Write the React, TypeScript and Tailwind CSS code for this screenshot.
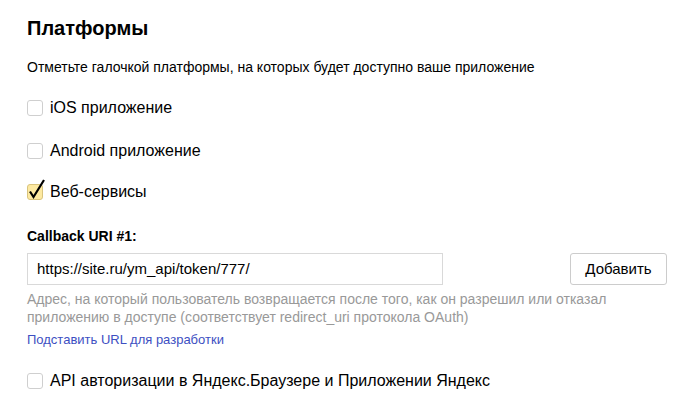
import React from 'react'

function Box({ checked }: { checked?: boolean }) {
  return (
    <span className="relative inline-block w-[16px] h-[16px] shrink-0">
      <span
        className={
          checked
            ? 'absolute inset-0 rounded-[3px] border border-[#d9c47d] bg-[#fde9a1]'
            : 'absolute inset-0 rounded-[3px] border border-[#cfcfcf] bg-white'
        }
      />
      {checked && (
        <svg className="absolute left-[1px] top-[-6px]" width="18" height="22" viewBox="0 0 18 22">
          <path d="M2 13.5 L5.5 19 L16 2" fill="none" stroke="#000" strokeWidth="2.2" strokeLinejoin="miter" />
        </svg>
      )}
    </span>
  )
}

function Check({ label, checked, className }: { label: string; checked?: boolean; className?: string }) {
  return (
    <label className={`flex items-center h-[20px] gap-[7px] text-[16px] text-black ${className ?? ''}`}>
      <Box checked={checked} />
      <span>{label}</span>
    </label>
  )
}

export default function App() {
  return (
    <div className="w-[679px] h-[412px] bg-white pl-[27px] pt-[16px]" style={{ fontFamily: '"Liberation Sans", Arial, sans-serif' }}>
      <div className="w-[640px]">
        <h1 className="text-[20px] leading-[24px] font-bold text-black">Платформы</h1>
        <p className="mt-[19px] text-[14px] leading-[16px] text-black">
          Отметьте галочкой платформы, на которых будет доступно ваше приложение
        </p>

        <Check className="mt-[23px]" label="iOS приложение" />
        <Check className="mt-[23px]" label="Android приложение" />
        <Check className="mt-[21px]" label="Веб-сервисы" checked />

        <div className="mt-[26px] text-[14px] leading-[16px] font-bold text-black">Callback URI #1:</div>

        <div className="mt-[9px] flex items-center justify-between">
          <div className="w-[416px] h-[32px] border border-[#d9d9d9] flex items-center px-[9px] text-[15px] text-black">
            https://site.ru/ym_api/token/777/
          </div>
          <button className="w-[97px] h-[32px] border border-[#cccccc] rounded-[3px] bg-white text-[15px] text-black">
            Добавить
          </button>
        </div>

        <p className="mt-[5px] text-[14px] leading-[18px] text-[#999999]">
          Адрес, на который пользователь возвращается после того, как он разрешил или отказал приложению в доступе (соответствует redirect_uri протокола OAuth)
        </p>

        <a className="block mt-[6px] text-[13px] leading-[16px] text-[#3d4fc2]">Подставить URL для разработки</a>

        <Check className="mt-[23px]" label="API авторизации в Яндекс.Браузере и Приложении Яндекс" />
      </div>
    </div>
  )
}
